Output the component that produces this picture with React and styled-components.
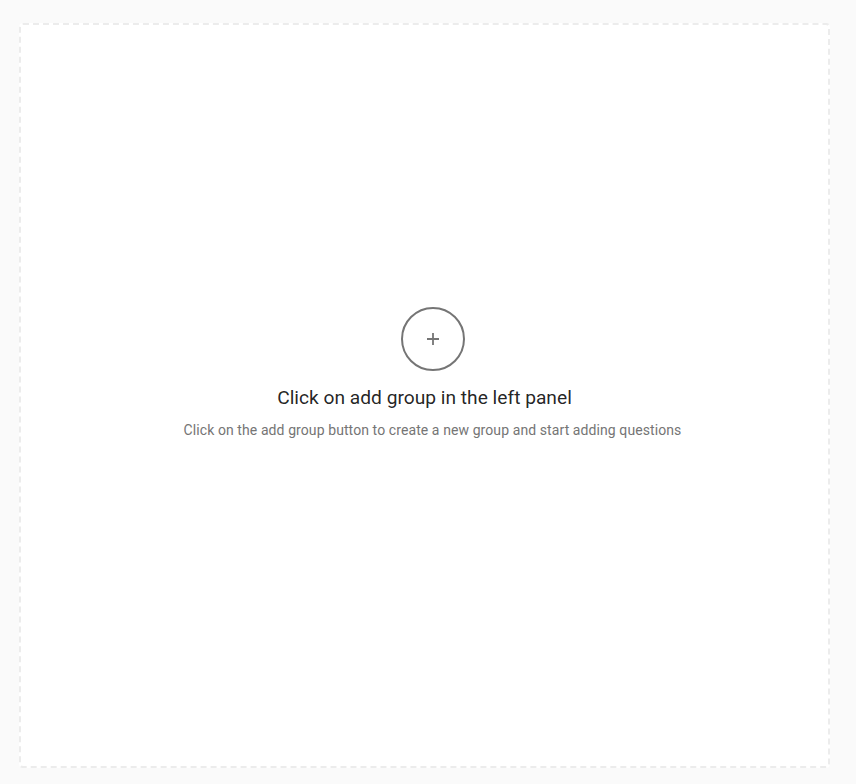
import React from "react";
import styled, { createGlobalStyle } from "styled-components";

const Global = createGlobalStyle`
  html, body { margin: 0; padding: 0; background: #fafafa; }
  body { font-family: Roboto, "Noto Sans", Arial, sans-serif; }
  #root { min-height: 784px; }
`;

const Page = styled.div`
  box-sizing: border-box;
  height: 784px;
  padding: 23px 26px 16px 19px;
  display: flex;
`;

const DropZone = styled.section`
  flex: 1;
  box-sizing: border-box;
  background: #ffffff;
  border: 2px dashed #ececec;
  border-radius: 4px;
  display: flex;
  flex-direction: column;
  align-items: center;
  justify-content: center;
  padding: 0 0 45px 16px;
`;

const AddCircle = styled.div`
  box-sizing: border-box;
  width: 64px;
  height: 64px;
  border: 2px solid #757575;
  border-radius: 50%;
  display: flex;
  align-items: center;
  justify-content: center;
  color: #757575;
`;

const Title = styled.h2`
  margin: 15px 16px 0 0;
  font-size: 19.2px;
  line-height: 24px;
  font-weight: 400;
  color: rgba(0, 0, 0, 0.87);
`;

const Subtitle = styled.p`
  margin: 10px 0 0;
  font-size: 14px;
  line-height: 20px;
  letter-spacing: 0.09px;
  font-weight: 400;
  color: #757575;
`;

export default function App() {
  return (
    <>
      <Global />
      <Page>
        <DropZone>
          <AddCircle>
            <svg width="14" height="14" viewBox="0 0 14 14">
              <path d="M7 1v12M1 7h12" stroke="currentColor" strokeWidth="1.8" fill="none" />
            </svg>
          </AddCircle>
          <Title>Click on add group in the left panel</Title>
          <Subtitle>Click on the add group button to create a new group and start adding questions</Subtitle>
        </DropZone>
      </Page>
    </>
  );
}
